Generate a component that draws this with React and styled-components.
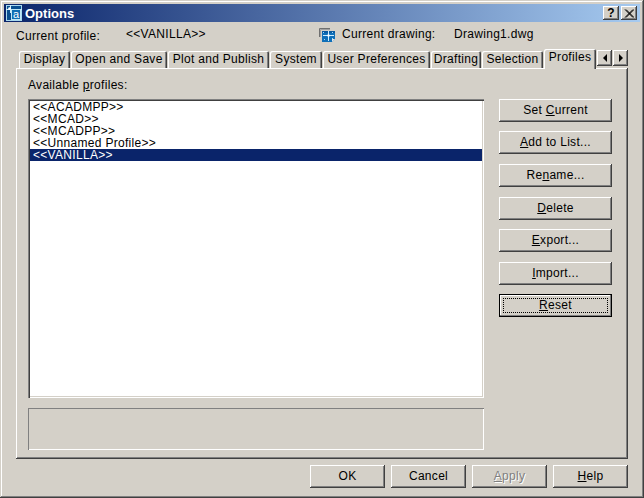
import React from "react";
import styled, { createGlobalStyle } from "styled-components";

const GlobalStyle = createGlobalStyle`
  html, body {
    margin: 0;
    padding: 0;
    background: #d4d0c8;
  }
  body {
    font-family: "Liberation Sans", Arial, sans-serif;
    font-size: 12px;
    color: #000;
  }
  * {
    box-sizing: border-box;
  }
`;

const bevel = `
  box-shadow: inset -1px -1px #404040, inset 1px 1px #fff, inset -2px -2px #808080;
`;

const Dialog = styled.div`
  width: 644px;
  height: 498px;
  padding: 4px;
  background: #d4d0c8;
  box-shadow: inset -1px -1px #404040, inset 1px 1px #d4d0c8, inset -2px -2px #808080,
    inset 2px 2px #fff;
  display: flex;
  flex-direction: column;
`;

const TitleBar = styled.div`
  height: 18px;
  padding: 0 3px 0 2px;
  display: flex;
  align-items: center;
  background: linear-gradient(90deg, #0a246a 0%, #a6caf0 100%);
`;

const TitleText = styled.span`
  margin-left: 3px;
  flex: 1;
  color: #fff;
  font-size: 13px;
  font-weight: bold;
`;

const TitleButton = styled.button`
  width: 16px;
  height: 14px;
  margin-left: ${(p) => p.$gap || 0}px;
  padding: 0;
  border: 0;
  background: #d4d0c8;
  ${bevel}
  display: flex;
  align-items: center;
  justify-content: center;
  font: bold 12px "Liberation Sans", sans-serif;
  color: #000;
`;

const InfoRow = styled.div`
  height: 27px;
  margin-left: 12px;
  display: grid;
  grid-template-columns: 110px 193px 23px 112px 1fr;
  align-items: center;
  letter-spacing: 0.3px;
`;

const InfoText = styled.span`
  margin-top: ${(p) => (p.$up ? -4 : 0)}px;
`;

const TabRow = styled.div`
  height: 19px;
  margin-left: 15px;
  display: flex;
  align-items: flex-end;
  gap: 1px;
`;

const Tab = styled.div`
  position: relative;
  z-index: ${(p) => (p.$active ? 2 : 0)};
  width: ${(p) => p.$w}px;
  height: ${(p) => (p.$active ? 20 : 17)}px;
  margin-bottom: ${(p) => (p.$active ? -1 : 0)}px;
  padding-top: 1px;
  background: #d4d0c8;
  border-radius: 2px 2px 0 0;
  box-shadow: inset 1px 1px #fff, inset -1px 0 #404040, inset -2px 0 #808080;
  text-align: center;
  line-height: 14px;
  letter-spacing: 0.3px;
  white-space: nowrap;
`;

const ScrollButton = styled.div`
  width: 15px;
  height: 16px;
  align-self: flex-start;
  margin-top: 1px;
  ${bevel}
  display: flex;
  align-items: center;
  justify-content: center;
`;

const Arrow = styled.i`
  width: 0;
  height: 0;
  border-top: 4px solid transparent;
  border-bottom: 4px solid transparent;
  border-${(p) => (p.$left ? "right" : "left")}: 4px solid #000;
`;

const Panel = styled.div`
  width: 612px;
  height: 391px;
  margin-left: 12px;
  padding-left: 12px;
  box-shadow: inset -1px -1px #404040, inset 1px 1px #fff, inset -2px -2px #808080;
  display: grid;
  grid-template-columns: 456px 113px;
  grid-template-rows: 31px 299px 42px;
  column-gap: 15px;
  row-gap: 0;
`;

const PanelLabel = styled.div`
  grid-column: 1 / 3;
  padding-top: 10px;
  line-height: 14px;
  letter-spacing: 0.3px;
`;

const ProfileList = styled.div`
  padding: 2px;
  background: #fff;
  overflow: hidden;
  box-shadow: inset 1px 1px #808080, inset 2px 2px #404040, inset -1px -1px #fff,
    inset -2px -2px #d4d0c8;
`;

const ProfileRow = styled.div`
  height: 12px;
  padding-left: 3px;
  line-height: 12px;
  letter-spacing: 0.3px;
  white-space: nowrap;
  background: ${(p) => (p.$selected ? "#0a246a" : "transparent")};
  color: ${(p) => (p.$selected ? "#fff" : "#000")};
`;

const SideButtons = styled.div`
  grid-row: 2 / 4;
  grid-column: 2;
  display: grid;
  grid-template-rows: 32px 33px 33px 32px 33px 32px 23px;
`;

const Button = styled.button`
  position: relative;
  width: ${(p) => p.$w || 113}px;
  height: 23px;
  padding: 0 0 2px;
  border: 0;
  background: #d4d0c8;
  ${(p) =>
    p.$focused
      ? "box-shadow: inset 0 0 0 1px #000, inset -2px -2px #808080, inset 2px 2px #fff;"
      : bevel}
  font: 12px "Liberation Sans", sans-serif;
  letter-spacing: 0.3px;
  color: ${(p) => (p.disabled ? "#808080" : "#000")};
  text-shadow: ${(p) => (p.disabled ? "1px 1px #fff" : "none")};
`;

const FocusRing = styled.span`
  position: absolute;
  inset: 4px;
  border: 1px dotted #000;
`;

const Description = styled.div`
  margin-top: 10px;
  height: 42px;
  box-shadow: inset 1px 1px #808080, inset -1px -1px #fff;
`;

const Footer = styled.div`
  margin-top: 6px;
  margin-right: 12px;
  display: flex;
  justify-content: flex-end;
  gap: 6px;
`;

const AcadIcon = () => (
  <svg width="16" height="16" viewBox="0 0 16 16">
    <rect x="0" y="0" width="16" height="16" fill="#0a4f8f" />
    <rect x="0.5" y="0.5" width="15" height="15" fill="none" stroke="#a8d8ee" />
    <path d="M0 4.5H16M4.5 0V8" stroke="#cfeefa" fill="none" />
    <rect x="5.5" y="4.5" width="9" height="10" fill="#0f6fb4" stroke="#bfe6f5" />
    <circle cx="3.5" cy="3.5" r="1.3" fill="#fff" />
    <text x="7" y="13" fontSize="11" fontFamily="Liberation Sans" fill="#fff">
      a
    </text>
  </svg>
);

const DrawingIcon = () => (
  <svg width="16" height="15" viewBox="0 0 16 15">
    <path d="M0.5 9V0.5H11" fill="none" stroke="#707070" />
    <path d="M1.5 9V1.5H11" fill="none" stroke="#a0a0a0" />
    <path d="M3 3H16V11L13 14H3Z" fill="#0f6fb8" />
    <path d="M3 3H16V5H3Z" fill="#0a5aa0" />
    <path d="M9.5 3V13M4 7.5H15" stroke="#cfeeff" />
    <path d="M8.5 6.5h2v2h-2z" fill="#fff" />
    <path d="M4 4h1v1H4zM13 4h1v1h-1zM5 11h1v1H5zM13 10h1v1h-1z" fill="#9fdcff" />
    <path d="M16 11L13 14V11Z" fill="#e8e8e8" />
  </svg>
);

const tabs = [
  ["Display", 51],
  ["Open and Save", 96],
  ["Plot and Publish", 101],
  ["System", 52],
  ["User Preferences", 107],
  ["Drafting", 50],
  ["Selection", 61],
  ["Profiles", 52, true],
];

const profiles = ["<<ACADMPP>>", "<<MCAD>>", "<<MCADPP>>", "<<Unnamed Profile>>", "<<VANILLA>>"];

const App = () => {
  return (
    <Dialog>
      <GlobalStyle />
      <TitleBar>
        <AcadIcon />
        <TitleText>Options</TitleText>
        <TitleButton>?</TitleButton>
        <TitleButton $gap={2}>
          <svg width="10" height="9" viewBox="0 0 10 9">
            <path d="M1 0.5L9 8.5M2 0.5L10 8.5M9 0.5L1 8.5M10 0.5L2 8.5" stroke="#000" />
          </svg>
        </TitleButton>
      </TitleBar>
      <InfoRow>
        <span>Current profile:</span>
        <InfoText $up>{"<<VANILLA>>"}</InfoText>
        <DrawingIcon />
        <InfoText $up>Current drawing:</InfoText>
        <InfoText $up>Drawing1.dwg</InfoText>
      </InfoRow>
      <TabRow>
        {tabs.map(([name, w, active]) => (
          <Tab key={name} $w={w} $active={active}>
            {name}
          </Tab>
        ))}
        <ScrollButton>
          <Arrow $left />
        </ScrollButton>
        <ScrollButton>
          <Arrow />
        </ScrollButton>
      </TabRow>
      <Panel>
        <PanelLabel>
          Available <u>p</u>rofiles:
        </PanelLabel>
        <ProfileList>
          {profiles.map((name) => (
            <ProfileRow key={name} $selected={name === "<<VANILLA>>"}>
              {name}
            </ProfileRow>
          ))}
        </ProfileList>
        <SideButtons>
          <Button>
            Set <u>C</u>urrent
          </Button>
          <Button>
            <u>A</u>dd to List...
          </Button>
          <Button>
            Re<u>n</u>ame...
          </Button>
          <Button>
            <u>D</u>elete
          </Button>
          <Button>
            <u>E</u>xport...
          </Button>
          <Button>
            <u>I</u>mport...
          </Button>
          <Button $focused>
            <FocusRing />
            <u>R</u>eset
          </Button>
        </SideButtons>
        <Description />
      </Panel>
      <Footer>
        <Button $w={75}>OK</Button>
        <Button $w={75}>Cancel</Button>
        <Button $w={75} disabled>
          <u>A</u>pply
        </Button>
        <Button $w={75}>
          <u>H</u>elp
        </Button>
      </Footer>
    </Dialog>
  );
};

export default App;
